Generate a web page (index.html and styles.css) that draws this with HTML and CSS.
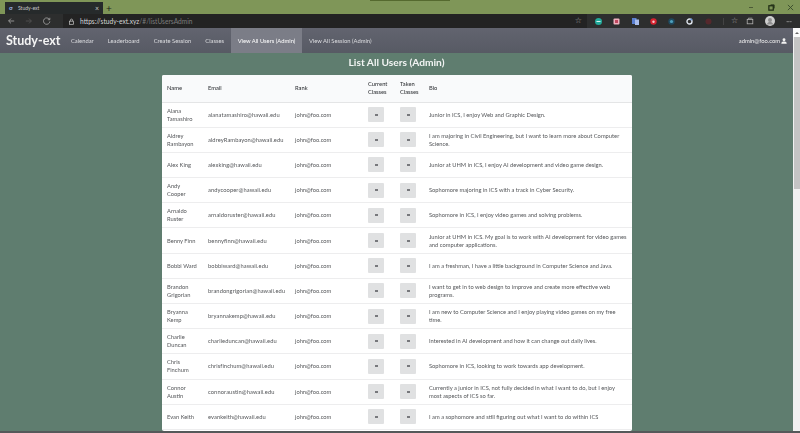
FILE: index.html
```html
<!DOCTYPE html>
<html lang="en">
<head>
<meta charset="utf-8">
<title>Study-ext</title>
<link rel="stylesheet" href="styles.css">
</head>
<body>
<div class="titlebar">
  <div class="tab">
    <span class="favicon">σ</span>
    <span class="tab-title">Study-ext</span>
    <span class="tab-close">×</span>
  </div>
  <span class="newtab">+</span>
  <div class="spacer"></div>
  <div class="win">
    <span class="win-min"></span>
    <svg class="win-ico" viewBox="0 0 8 8"><rect x="1" y="2" width="5" height="5" fill="none" stroke="#1d2a12" stroke-width="1.4"/><path d="M3 1h4v4" fill="none" stroke="#1d2a12"/></svg>
    <svg class="win-ico" viewBox="0 0 8 8"><path d="M1 1l6 6M7 1l-6 6" stroke="#36482a" stroke-width="1"/></svg>
  </div>
  <div class="notch"></div>
</div>
<div class="addressbar">
  <svg class="tool" viewBox="0 0 10 10"><path d="M9 5H2M5 2L2 5l3 3" fill="none" stroke="#a8a8a8"/></svg>
  <svg class="tool" viewBox="0 0 10 10"><path d="M1 5h7M5 2l3 3-3 3" fill="none" stroke="#555"/></svg>
  <svg class="tool" viewBox="0 0 10 10"><path d="M8 3a4 4 0 1 0 .6 2.5M8.5 1v2.4H6" fill="none" stroke="#b5b5b5" stroke-width=".9"/></svg>
  <div class="url">
    <svg class="lock" viewBox="0 0 10 10"><rect x="2" y="4.5" width="6" height="4.5" fill="none" stroke="#c8c8c8"/><path d="M3.5 4.5V3a1.5 1.5 0 0 1 3 0v1.5" fill="none" stroke="#c8c8c8"/></svg>
    <span class="url-host">https://study-ext.xyz</span><span class="url-path">/#/listUsersAdmin</span>
    <div class="spacer"></div>
    <span class="star">☆</span>
  </div>
  <div class="exts">
    <svg class="ext" viewBox="0 0 7 7"><circle cx="3.5" cy="3.5" r="3.5" fill="#22a99a"/><rect x="1.5" y="3" width="4" height="1" fill="#d8f3ef"/></svg>
    <svg class="ext" viewBox="0 0 7 7"><rect x=".5" y=".5" width="6" height="6" rx="1" fill="#eeb0bd"/><rect x="2" y="2" width="3" height="3" fill="#c0475f"/></svg>
    <svg class="ext" viewBox="0 0 7 7"><rect width="4.5" height="6" fill="#5a7fd0"/><rect x="3" y="1.5" width="4" height="5.5" fill="#a9bdec"/></svg>
    <svg class="ext" viewBox="0 0 7 7"><circle cx="3.5" cy="3.5" r="3.2" fill="#d8222f"/><circle cx="3.5" cy="3.8" r="1.2" fill="#f7c9cc"/></svg>
    <svg class="ext" viewBox="0 0 7 7"><circle cx="3.5" cy="3.5" r="3.2" fill="#1f4a60"/><circle cx="3.5" cy="3.5" r="1.6" fill="#4fa0bd"/></svg>
    <svg class="ext" viewBox="0 0 7 7"><circle cx="3.5" cy="3.5" r="2.5" fill="none" stroke="#dfe4ec" stroke-width="1.4"/><circle cx="5.3" cy="1.6" r="1" fill="#5f8fd8"/></svg>
    <svg class="ext" viewBox="0 0 7 7"><circle cx="3.5" cy="3.5" r="3" fill="#55282c"/></svg>
    <span class="sep"></span>
    <span class="star">☆</span>
    <svg class="tool" viewBox="0 0 10 10"><rect x="1.5" y="3" width="7" height="5.5" fill="none" stroke="#b0b0b0"/><path d="M3 3V1.5h5" fill="none" stroke="#b0b0b0"/></svg>
    <svg class="avatar" viewBox="0 0 10 10"><circle cx="5" cy="5" r="5" fill="#cfcfcf"/><circle cx="5" cy="4" r="2" fill="#8f8f8f"/><path d="M1.8 8.5c.6-2 1.8-2.4 3.2-2.4s2.6.4 3.2 2.4z" fill="#8f8f8f"/></svg>
    <span class="more">···</span>
  </div>
</div>
<div class="viewport">
  <div class="page">
    <nav class="nav">
      <span class="brand">Study-ext</span>
      <a class="nav-item">Calendar</a>
      <a class="nav-item">Leaderboard</a>
      <a class="nav-item">Create Session</a>
      <a class="nav-item">Classes</a>
      <a class="nav-item active">View All Users (Admin)</a>
      <a class="nav-item">View All Session (Admin)</a>
      <div class="spacer"></div>
      <span class="user">admin@foo.com
        <svg class="user-ico" viewBox="0 0 10 10"><circle cx="5" cy="3" r="2.4" fill="#f2f2f2"/><path d="M0.5 9.5c0-3 2-3.6 4.5-3.6s4.5.6 4.5 3.6z" fill="#f2f2f2"/></svg>
      </span>
    </nav>
    <h1 class="heading">List All Users (Admin)</h1>
    <div class="card">
      <table class="users">
        <colgroup>
          <col class="c-name"><col class="c-email"><col class="c-rank"><col class="c-cur"><col class="c-tak"><col class="c-bio">
        </colgroup>
        <thead>
          <tr><th>Name</th><th>Email</th><th>Rank</th><th>Current Classes</th><th>Taken Classes</th><th>Bio</th></tr>
        </thead>
        <tbody>
          <tr><td>Alana Tamashiro</td><td>alanatamashiro@hawaii.edu</td><td>john@foo.com</td><td><span class="btn"></span></td><td><span class="btn"></span></td><td>Junior in ICS, I enjoy Web and Graphic Design.</td></tr>
          <tr><td>Aldrey Rambayon</td><td>aldreyRambayon@hawaii.edu</td><td>john@foo.com</td><td><span class="btn"></span></td><td><span class="btn"></span></td><td>I am majoring in Civil Engineering, but I want to learn more about Computer Science.</td></tr>
          <tr><td>Alex King</td><td>alexking@hawaii.edu</td><td>john@foo.com</td><td><span class="btn"></span></td><td><span class="btn"></span></td><td>Junior at UHM in ICS, I enjoy AI development and video game design.</td></tr>
          <tr><td>Andy Cooper</td><td>andycooper@hawaii.edu</td><td>john@foo.com</td><td><span class="btn"></span></td><td><span class="btn"></span></td><td>Sophomore majoring in ICS with a track in Cyber Security.</td></tr>
          <tr><td>Arnaldo Ruster</td><td>arnaldoruster@hawaii.edu</td><td>john@foo.com</td><td><span class="btn"></span></td><td><span class="btn"></span></td><td>Sophomore in ICS, I enjoy video games and solving problems.</td></tr>
          <tr><td>Benny Finn</td><td>bennyfinn@hawaii.edu</td><td>john@foo.com</td><td><span class="btn"></span></td><td><span class="btn"></span></td><td>Junior at UHM in ICS. My goal is to work with AI development for video games and computer applications.</td></tr>
          <tr><td>Bobbi Ward</td><td>bobbiward@hawaii.edu</td><td>john@foo.com</td><td><span class="btn"></span></td><td><span class="btn"></span></td><td>I am a freshman, I have a little background in Computer Science and Java.</td></tr>
          <tr><td>Brandon Grigorian</td><td>brandongrigorian@hawaii.edu</td><td>john@foo.com</td><td><span class="btn"></span></td><td><span class="btn"></span></td><td>I want to get in to web design to improve and create more effective web programs.</td></tr>
          <tr><td>Bryanna Kemp</td><td>bryannakemp@hawaii.edu</td><td>john@foo.com</td><td><span class="btn"></span></td><td><span class="btn"></span></td><td>I am new to Computer Science and I enjoy playing video games on my free time.</td></tr>
          <tr><td>Charlie Duncan</td><td>charlieduncan@hawaii.edu</td><td>john@foo.com</td><td><span class="btn"></span></td><td><span class="btn"></span></td><td>Interested in AI development and how it can change out daily lives.</td></tr>
          <tr><td>Chris Finchum</td><td>chrisfinchum@hawaii.edu</td><td>john@foo.com</td><td><span class="btn"></span></td><td><span class="btn"></span></td><td>Sophomore in ICS, looking to work towards app development.</td></tr>
          <tr><td>Connor Austin</td><td>connoraustin@hawaii.edu</td><td>john@foo.com</td><td><span class="btn"></span></td><td><span class="btn"></span></td><td>Currently a junior in ICS, not fully decided in what I want to do, but I enjoy most aspects of ICS so far.</td></tr>
          <tr><td>Evan Keith</td><td>evankeith@hawaii.edu</td><td>john@foo.com</td><td><span class="btn"></span></td><td><span class="btn"></span></td><td>I am a sophomore and still figuring out what I want to do within ICS</td></tr>
        </tbody>
      </table>
    </div>
  </div>
  <div class="scrollbar">
    <span class="arrow"></span>
    <div class="thumb"></div>
  </div>
</div>
<div class="bottomline"></div>
</body>
</html>
```

FILE: styles.css
```css
* { box-sizing: border-box; }
html, body { margin: 0; height: 433px; overflow: hidden; }
body { display: flex; flex-direction: column; font-family: Lato, "Open Sans", sans-serif; background: #5f7d6f; filter: blur(0.25px); }
.spacer { flex: 1; }

.titlebar { height: 14px; flex: none; background: #7f9658; display: flex; align-items: flex-end; position: relative; }
.notch { position: absolute; left: 370px; top: 0; width: 80px; height: 1px; background: #55692f; }
.tab { width: 98px; height: 12px; margin-left: 5px; background: #262a2b; display: flex; align-items: center; padding: 0 4px 0 4px; color: #c9c9c9; font-size: 5px; }
.favicon { width: 6px; height: 6px; color: #9db4e8; font-size: 6px; line-height: 6px; font-weight: bold; }
.tab-title { margin-left: 3px; flex: 1; }
.tab-close { font-size: 7px; line-height: 7px; }
.newtab { margin-left: 3px; width: 10px; font-size: 10px; line-height: 12px; color: #20261a; }
.win { display: flex; align-items: center; align-self: center; gap: 12px; padding-right: 6px; }
.win-min { width: 4px; height: 1px; background: #4c5a36; margin-right: 3px; }
.win-ico { width: 7px; height: 7px; }

.addressbar { height: 14px; flex: none; background: #2d2e2e; display: flex; align-items: center; padding-left: 7px; }
.tool { width: 8px; height: 8px; flex: none; margin-right: 10px; }
.url { width: 524px; margin-left: 2px; height: 14px; background: #232323; display: flex; align-items: center; padding-left: 5px; font-size: 6.6px; }
.lock { width: 7px; height: 7px; margin-right: 5px; }
.url-host { color: #d6d6d6; }
.url-path { color: #7c7c7c; }
.star { color: #a5a5a5; font-size: 8px; line-height: 8px; margin-right: 5px; font-family: "DejaVu Sans", sans-serif; }
.exts { display: flex; align-items: center; flex: 1; padding-left: 8px; }
.ext { width: 7px; height: 7px; margin-right: 11.3px; flex: none; }
.sep { width: 1px; height: 7px; background: #444; margin-right: 7px; flex: none; }
.exts .star { margin-right: 8px; }
.exts .tool { margin-right: 11px; }
.avatar { width: 10px; height: 10px; flex: none; margin-right: 11px; }
.more { color: #a5a5a5; font-size: 7px; line-height: 7px; }

.viewport { height: 403px; flex: none; display: flex; }
.page { flex: 1; min-width: 0; overflow: hidden; }

.nav { height: 25px; background: linear-gradient(#62646f, #575a64); display: flex; align-items: center; color: #dcdde0; font-size: 5.83px; }
.brand { font-size: 12.5px; font-weight: 700; color: #f4f4f4; padding-left: 6px; margin-right: 3.5px; }
.nav-item { height: 25px; display: flex; align-items: center; padding: 0 7px; white-space: nowrap; }
.active { background: #7b7d87; color: #fff; padding: 0 6.5px; }
.user { display: flex; align-items: center; gap: 1px; padding-right: 6px; color: #eee; }
.user-ico { width: 6px; height: 6px; }

.heading { margin: 0; height: 22px; display: flex; align-items: center; justify-content: center; color: #f2f4f3; font-size: 10.2px; font-weight: 700; padding-bottom: 4px; }

.card { width: 470px; height: 356px; margin-left: 162px; background: #fff; border-radius: 2px; overflow: hidden; }
.users { width: 470px; table-layout: fixed; border-collapse: collapse; font-size: 5.75px; line-height: 8px; color: #55575a; }
.c-name { width: 41px; }
.c-email { width: 87px; }
.c-rank { width: 73px; }
.c-cur { width: 32px; }
.c-tak { width: 29px; }
.users th { height: 27px; background: #f9fafb; text-align: left; font-weight: 500; color: #34363a; padding: 0 5px; border-bottom: 1px solid #e4e5e6; }
.users td { height: 25.2px; padding: 0 5px; border-bottom: 1px solid #ededee; white-space: normal; }
.users td:nth-child(2) { white-space: nowrap; letter-spacing: 0.08px; }
.users td:nth-child(6) { padding-right: 3.5px; }
.btn { display: flex; width: 16px; height: 15px; background: #e0e1e2; align-items: center; justify-content: center; border-radius: 1px; }
.btn::before { content: ""; width: 3px; height: 2px; background: #77787c; }

.scrollbar { width: 7px; flex: none; background: #f1f1f1; display: flex; flex-direction: column; align-items: center; }
.arrow { height: 9px; width: 7px; background: #fafafa; flex: none; display: flex; align-items: center; justify-content: center; }
.arrow::before { content: ""; border: 2px solid transparent; border-top-width: 0; border-bottom-color: #666; }
.thumb { width: 6px; height: 152px; background: #c4c4c4; }
.bottomline { height: 2px; flex: none; background: #55595a; }
```
